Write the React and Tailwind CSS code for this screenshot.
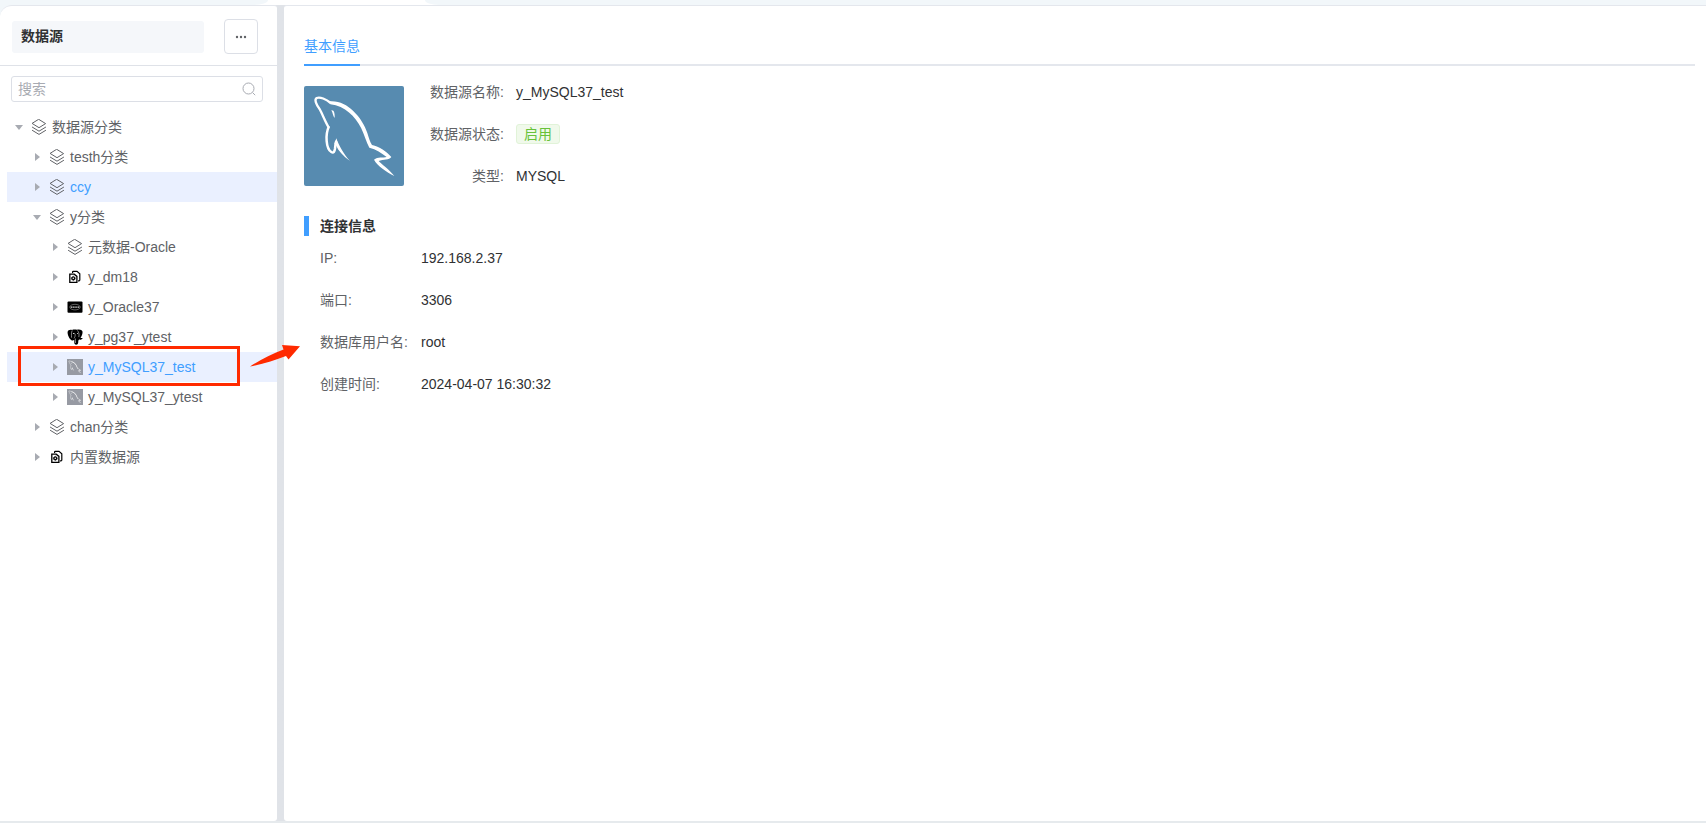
import { useState } from 'react';

const treeData = {
    id: 'root',
    label: '数据源分类',
    icon: 'layers',
    children: [
        { id: 'testh', label: 'testh分类', icon: 'layers', children: [] },
        { id: 'ccy', label: 'ccy', icon: 'layers', active: true, children: [] },
        {
            id: 'y',
            label: 'y分类',
            icon: 'layers',
            children: [
                { id: 'meta', label: '元数据-Oracle', icon: 'layers' },
                { id: 'dm18', label: 'y_dm18', icon: 'copy' },
                { id: 'oracle37', label: 'y_Oracle37', icon: 'oracle' },
                { id: 'pg37', label: 'y_pg37_ytest', icon: 'postgres' },
                { id: 'mysql37', label: 'y_MySQL37_test', icon: 'mysql', active: true, marked: true },
                { id: 'mysql37y', label: 'y_MySQL37_ytest', icon: 'mysql' },
            ],
        },
        { id: 'chan', label: 'chan分类', icon: 'layers', children: [] },
        { id: 'builtin', label: '内置数据源', icon: 'copy', children: [] },
    ],
};

const connectionInfo = [
    { label: 'IP:', value: '192.168.2.37' },
    { label: '端口:', value: '3306' },
    { label: '数据库用户名:', value: 'root' },
    { label: '创建时间:', value: '2024-04-07 16:30:32' },
];

function LayersIcon() {
    return (
        <svg viewBox="0 0 16 16" className="size-4" fill="none" stroke="#606266" strokeLinejoin="round" strokeLinecap="round">
            <path d="M8 .5 14.600 4.600 8 8.700 1.400 4.600z" />
            <path d="M1.400 8.200 8 12.200l6.600-4M1.400 11.400 8 15.400l6.600-4" />
        </svg>
    );
}

function CopyIcon() {
    return (
        <svg viewBox="0 0 16 16" className="size-4" fill="none" stroke="#000">
            <path d="M5.600 4V3q0-.6.6-.6H10l2.800 2.400V11q0 .8-.8.8h-1" strokeWidth="1.200" />
            <path d="M2.800 5.200h4.400L9.900 7.400v5.900H2.800z" strokeWidth="1.300" />
            <path d="M4.400 8.600 6.300 7.200l1.900 1.400v1.600L6.300 11.500l-1.900-1.300z" fill="#000" strokeWidth=".5" />
            <circle cx="6.300" cy="9.300" r=".8" fill="#fff" stroke="none" />
        </svg>
    );
}

function OracleIcon() {
    return (
        <svg viewBox="0 0 16 16" className="size-4">
            <rect x=".5" y="2.500" width="15" height="11.200" rx="1" fill="#000" />
            <ellipse cx="8" cy="8.100" rx="5.200" ry="2.800" fill="none" stroke="#888" strokeWidth=".7" />
            <path d="M3.800 8.100h8.400" stroke="#ddd" strokeWidth="1.300" strokeDasharray="1.300 .5" />
        </svg>
    );
}

function PostgresIcon() {
    return (
        <svg viewBox="0 0 16 16" className="size-4">
            <path
                d="M.6 3C.8 1 3 .4 5 .9 6.500.3 8.500.3 10 .8c2.500-.7 5 0 5.500 1.800.4 2-.8 4.600-2 6.400.8.2 1.700 0 2.100.2-.4 1.200-2 1.700-3.400 1.400-.9.4-.9 1.500-1 2.900-.2 1.500-.9 2.200-2 2.200-1.300 0-1.900-.8-1.900-2.200V10.800c-.9.900-2.400 1-3.100.1C2 9.500.4 5.400.6 3z"
                fill="#000"
            />
            <path
                d="M5.200 1.500c-1 2-.8 4.600-.6 7.200M10.500 1.500c1.400 1.700 1.900 3.600 1.300 6.600M8.300 9.500c.3 1.400.2 2.700.2 4.500M6.300 4.500c1-.5 1.900 0 1.900 1.300 0 1-.1 2-1.200 3.500"
                fill="none"
                stroke="#bbb"
                strokeWidth=".7"
            />
            <circle cx="6.400" cy="4.600" r=".5" fill="#fff" />
            <circle cx="10.600" cy="4.400" r=".5" fill="#fff" />
        </svg>
    );
}

function Dolphin() {
    return (
        <>
            <path
                d="M80 51C66 39 48 32 38 36 30 41 37 55 46 68 55 83 62 104 74 124"
                fill="none"
                stroke="#fff"
                strokeWidth="7"
            />
            <path
                d="M75 121C63 146 66 188 82 198 89 202 92 196 93 188 94 178 95 170 97 165"
                fill="none"
                stroke="#fff"
                strokeWidth="7.500"
            />
            <path
                d="M75 46C104 43 128 56 147 74 169 95 182 118 190 141 194 154 198 168 204 177 226 182 248 197 262 213 256 222 238 220 224 225 232 235 257 251 271 270 247 257 221 241 210 221 221 212 238 216 248 213 233 201 216 190 196 185 187 169 181 145 171 125 153 92 124 60 79 55Z"
                fill="#fff"
            />
            <path d="M91 174 97 157C104 178 120 206 138 225 117 210 103 195 96 178Z" fill="#fff" />
            <path d="M82 73C90 71 93 82 92 96 86 91 87 80 82 73Z" fill="#fff" />
        </>
    );
}

function MysqlIcon() {
    return (
        <svg viewBox="0 0 300 300" className="size-4">
            <rect width="300" height="300" fill="#979aa3" />
            <Dolphin />
        </svg>
    );
}

const icons = {
    layers: LayersIcon,
    copy: CopyIcon,
    oracle: OracleIcon,
    postgres: PostgresIcon,
    mysql: MysqlIcon,
};

// red frame and arrow laid over the highlighted row
function Marker() {
    return (
        <div className="pointer-events-none absolute -top-1.5 left-[11px] z-10 flex items-start gap-2.5">
            <div className="h-10 w-[222px] border-3 border-[#ff2a00]" />
            <svg viewBox="0 0 50 24" className="-mt-0.5 h-6 w-[50px]" fill="#ff2a00">
                <path d="M0 22.500C10 16 21 10 33.500 5.500L32 1 50 2.200 38.500 15.500 36 12C25 16.500 12 20 0 22.500Z" />
            </svg>
        </div>
    );
}

function TreeNode({ node, depth }) {
    const [open, setOpen] = useState(depth === 0 || node.id === 'y');
    const Icon = icons[node.icon];

    return (
        <li role="treeitem" aria-expanded={open} aria-selected={!!node.active}>
            <div
                className={`relative flex h-[30px] items-center ${node.active ? 'bg-[#eaf0ff]' : ''}`}
                style={{ paddingLeft: depth * 18 }}
            >
                <button
                    type="button"
                    aria-label={node.label}
                    onClick={() => setOpen(!open)}
                    className="flex h-full w-6 items-center justify-center"
                >
                    <svg viewBox="0 0 10 10" className={`size-2.5 ${open ? 'rotate-90' : ''}`}>
                        <path d="M3 1v8l5-4z" fill="#a8abb2" />
                    </svg>
                </button>
                <Icon />
                <span className={`ml-[5px] whitespace-nowrap ${node.active ? 'text-[#409eff]' : 'text-[#606266]'}`}>
                    {node.label}
                </span>
                {node.marked && <Marker />}
            </div>
            {open && node.children && (
                <ul role="group">
                    {node.children.map((child) => (
                        <TreeNode key={child.id} node={child} depth={depth + 1} />
                    ))}
                </ul>
            )}
        </li>
    );
}

function Sidebar() {
    const [keyword, setKeyword] = useState('');

    return (
        <aside className="w-[277px] shrink-0 rounded-tl-xl rounded-r-[3px] border-t border-[#e4e7ed] bg-white">
            <div className="flex items-center justify-between border-b border-[#dfe2e8] pt-[13px] pr-[19px] pb-[11px] pl-3">
                <h1 className="h-8 w-[192px] rounded-[3px] bg-[#f5f7fa] px-[9px] text-sm leading-[30px] font-bold text-[#303133]">
                    数据源
                </h1>
                <button
                    type="button"
                    aria-label="更多"
                    className="flex h-[35px] w-[34px] items-center justify-center rounded border border-[#dcdfe6]"
                >
                    <svg viewBox="0 0 12 4" className="h-1 w-3" fill="#606266">
                        <circle cx="2" cy="2" r="1.200" />
                        <circle cx="6" cy="2" r="1.200" />
                        <circle cx="10" cy="2" r="1.200" />
                    </svg>
                </button>
            </div>
            <label className="mt-2.5 mr-3.5 ml-[11px] flex h-[26px] items-center rounded-[3px] border border-[#dcdfe6] px-1.5">
                <input
                    type="text"
                    value={keyword}
                    onChange={(e) => setKeyword(e.target.value)}
                    placeholder="搜索"
                    aria-label="搜索"
                    className="min-w-0 flex-1 bg-transparent text-sm text-[#606266] outline-none placeholder:text-[#a8abb2]"
                />
                <svg viewBox="0 0 14 14" className="size-3.5" fill="none" stroke="#a8abb2">
                    <circle cx="6.500" cy="6.500" r="5.500" />
                    <path d="m10.600 10.600 2.600 2.600" />
                </svg>
            </label>
            <ul role="tree" className="mt-2.5 pl-[7px] text-sm">
                <TreeNode node={treeData} depth={0} />
            </ul>
        </aside>
    );
}

function Details() {
    return (
        <main className="min-w-0 flex-1 rounded-l-[3px] border-t border-[#e4e7ed] bg-white pt-[25px] pr-[11px] pl-5 text-sm text-[#303133]">
            <nav className="flex border-b-2 border-[#e4e7ed]">
                <button type="button" className="-mb-0.5 border-b-2 border-[#409eff] pt-[5px] pb-2 leading-5 text-[#409eff]">
                    基本信息
                </button>
            </nav>

            <section className="mt-5 flex">
                <svg viewBox="0 0 300 300" className="size-[100px] rounded-xs">
                    <rect width="300" height="300" fill="#578bb0" />
                    <Dolphin />
                </svg>
                <dl className="-mt-1 ml-[26px] grid grid-cols-[74px_auto] gap-x-3 gap-y-[22px] leading-5">
                    <dt className="text-right text-[#606266]">数据源名称:</dt>
                    <dd>y_MySQL37_test</dd>
                    <dt className="text-right text-[#606266]">数据源状态:</dt>
                    <dd className="flex">
                        <span className="h-5 rounded-[3px] border border-[#e1f3d8] bg-[#f0f9eb] px-[7px] leading-[18px] text-[#67c23a]">
                            启用
                        </span>
                    </dd>
                    <dt className="text-right text-[#606266]">类型:</dt>
                    <dd>MYSQL</dd>
                </dl>
            </section>

            <section className="mt-[30px]">
                <h2 className="border-l-5 border-[#409eff] pl-[11px] leading-5 font-bold">连接信息</h2>
                <dl className="mt-3 ml-4 grid grid-cols-[89px_auto] gap-x-3 gap-y-[22px] leading-5">
                    {connectionInfo.map((item) => (
                        <div key={item.label} className="contents">
                            <dt className="text-[#606266]">{item.label}</dt>
                            <dd>{item.value}</dd>
                        </div>
                    ))}
                </dl>
            </section>
        </main>
    );
}

function App() {
    return (
        <div className="flex min-h-screen flex-col bg-[#e6eaed] font-['Liberation_Sans','Noto_Sans_CJK_SC',sans-serif]">
            <div className="flex h-[5px] bg-white">
                <div className="w-[268px] rounded-br-[14px_5px] bg-[#f2f7fa]" />
                <div className="ml-[157px] flex-1 rounded-bl-[14px_5px] bg-[#f2f7fa]" />
            </div>
            <div className="mb-0.5 flex flex-1 gap-[7px] bg-linear-to-r from-[#f2f7fa] from-[100px] to-[#e0e3e8] to-[200px]">
                <Sidebar />
                <Details />
            </div>
        </div>
    );
}

export default App;
